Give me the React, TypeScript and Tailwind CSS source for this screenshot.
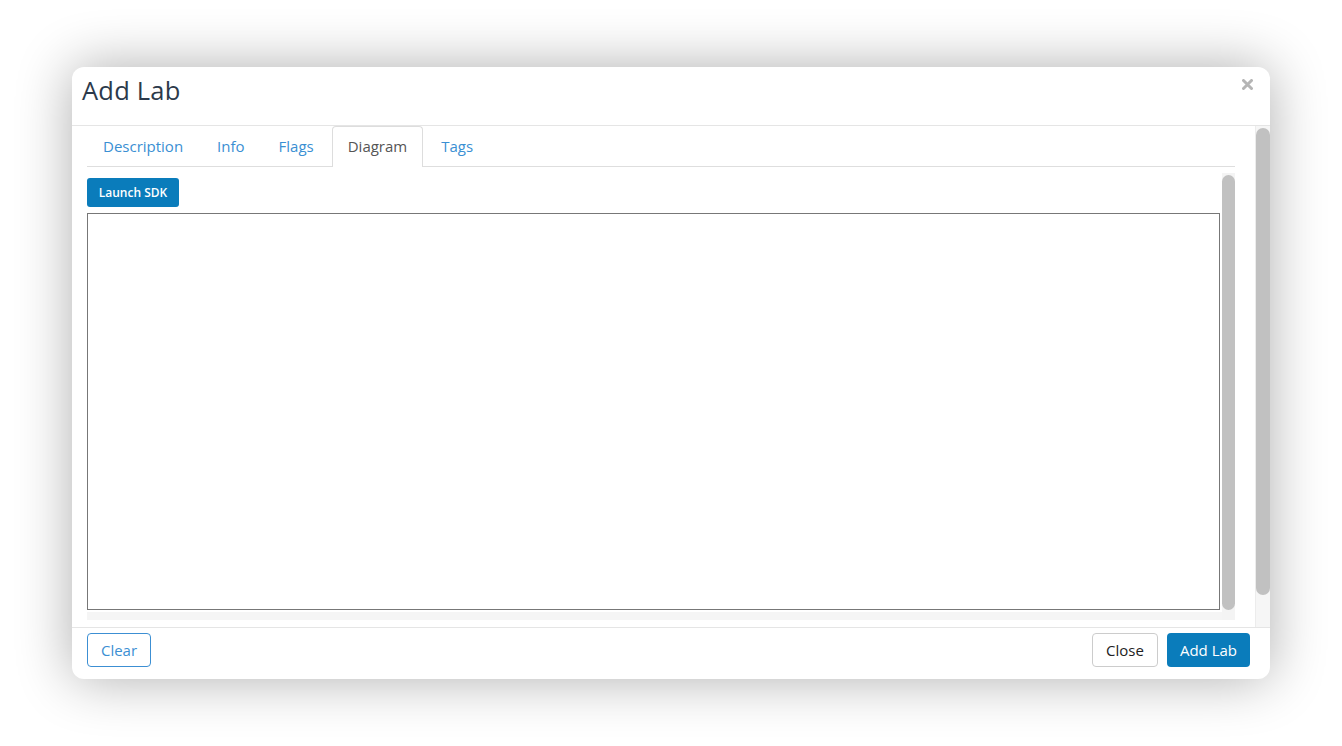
import React from "react";

export default function App() {
  const tabs = ["Description", "Info", "Flags", "Diagram", "Tags"];
  return (
    <div className="flex h-[746px] w-full items-center justify-center bg-white font-['Open_Sans',sans-serif]">
      <div className="flex h-[612px] w-[1198px] flex-col overflow-hidden rounded-[12px] bg-white shadow-[0_0_55px_rgba(0,0,0,0.32)]">
        {/* header */}
        <div className="relative flex h-[59px] shrink-0 items-center border-b border-[#e5e5e5] pb-[11px] pl-[10px]">
          <h1 className="text-[25.5px] leading-none tracking-[0.2px] text-[#2c3a4b]">Add Lab</h1>
          <svg className="absolute right-[17px] top-[12px]" width="11" height="11" viewBox="0 0 11 11">
            <path d="M1.5 1.5 L9.5 9.5 M9.5 1.5 L1.5 9.5" stroke="#b5b5b5" strokeWidth="3" strokeLinecap="round" />
          </svg>
        </div>
        {/* body */}
        <div className="flex min-h-0 flex-1">
          <div className="flex min-w-0 flex-1 flex-col pl-[15px] pr-[20px]">
            <div className="flex h-[41px] shrink-0 items-end border-b border-[#dedede]">
              {tabs.map((t) => (
                <div
                  key={t}
                  className={
                    t === "Diagram"
                      ? "-mb-px mr-[2px] flex h-[41px] items-center rounded-t-[4px] border border-b-0 border-[#dddddd] bg-white px-[15px] pb-[1px] text-[15px] text-[#555555]"
                      : "mr-[2px] flex h-[40px] items-center px-[16px] text-[15px] text-[#3a8fd3]"
                  }
                >
                  {t}
                </div>
              ))}
            </div>
            <div className="mt-[6px] flex h-[447px] shrink-0">
              <div className="flex min-w-0 flex-1 flex-col">
                <div className="flex flex-1 flex-col">
                  <div className="mt-[5px]">
                    <button className="flex h-[29px] w-[92px] items-center justify-center rounded-[3px] bg-[#0a7cbb] text-[12px] font-semibold text-white">
                      Launch SDK
                    </button>
                  </div>
                  <div className="mr-[2px] mt-[6px] h-[397px] border border-[#777777] bg-white" />
                </div>
                <div className="mt-[2px] h-[8px] bg-[#f5f5f5]" />
              </div>
              <div className="flex w-[13px] shrink-0 justify-center bg-[#f4f4f4] pb-[10px] pt-[2px]">
                <div className="w-[8px] flex-1 rounded-full bg-[#c1c1c1]" />
              </div>
            </div>
          </div>
          <div className="flex w-[15px] shrink-0 justify-center border-l border-[#ececec] bg-[#f6f6f6] pb-[32px] pt-[2px]">
            <div className="w-[8px] flex-1 rounded-full bg-[#c1c1c1]" />
          </div>
        </div>
        {/* footer */}
        <div className="flex h-[52px] shrink-0 items-start justify-between border-t border-[#e5e5e5] pl-[15px] pr-[20px] pt-[5px]">
          <button className="h-[34px] w-[64px] rounded-[4px] border border-[#3c8fd3] text-[15px] text-[#3c8fd3]">Clear</button>
          <div className="flex gap-[9px]">
            <button className="h-[34px] w-[66px] rounded-[4px] border border-[#cccccc] text-[15px] text-[#222222]">Close</button>
            <button className="h-[34px] w-[83px] rounded-[4px] bg-[#0a7cbb] text-[15px] font-medium text-white">Add Lab</button>
          </div>
        </div>
      </div>
    </div>
  );
}
